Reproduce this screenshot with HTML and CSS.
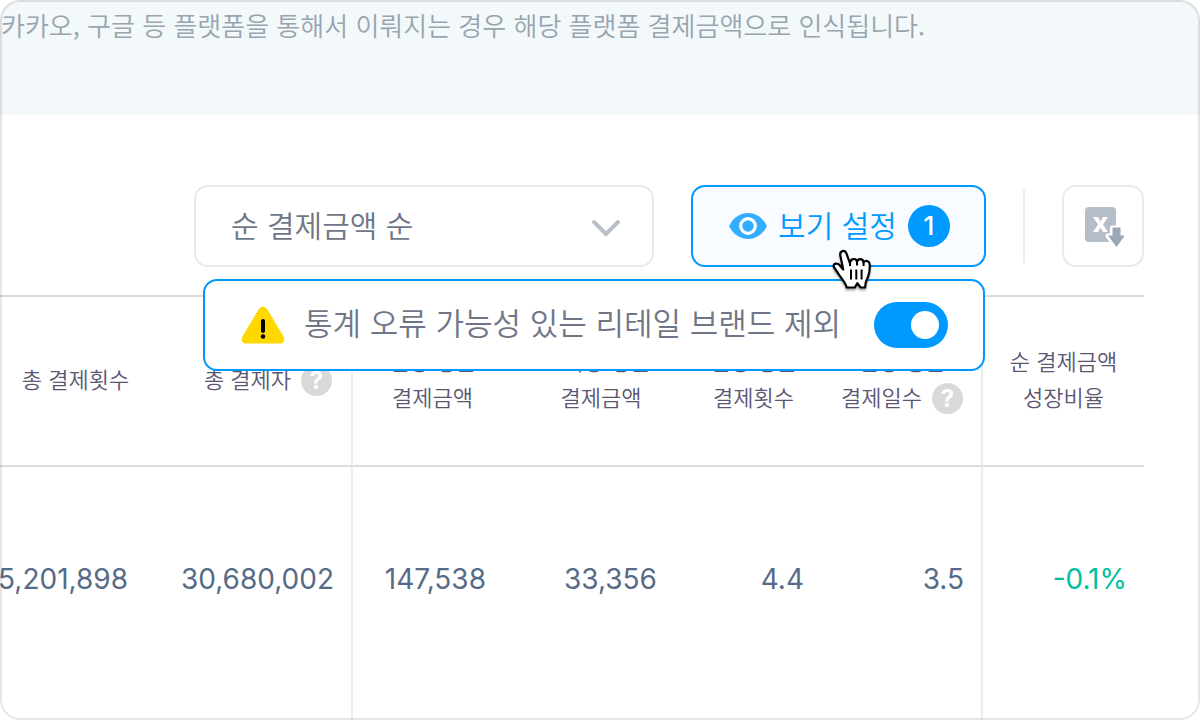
FILE: index.html
```html
<!DOCTYPE html>
<html lang="ko">
<head>
<meta charset="utf-8">
<meta name="viewport" content="width=device-width, initial-scale=1">
<title>순 결제금액 순</title>
<link rel="stylesheet" href="styles.css">
</head>
<body>
<main class="panel">
  <p class="notice">카카오, 구글 등 플랫폼을 통해서 이뤄지는 경우 해당 플랫폼 결제금액으로 인식됩니다.</p>

  <div class="toolbar">
    <div class="sort">
      <select class="sort-select" aria-label="정렬">
        <option>순 결제금액 순</option>
      </select>
      <svg class="sort-arrow" width="30" height="18" viewBox="0 0 30 18" aria-hidden="true"><path d="M3 3l12 12L27 3" fill="none" stroke="#b6bfca" stroke-width="4" stroke-linecap="round"/></svg>
    </div>

    <div class="view">
      <button class="view-button" type="button">
        <svg width="38" height="26" viewBox="0 0 38 26" aria-hidden="true"><path d="M0 13C4 5 11 0 19 0s15 5 19 13c-4 8-11 13-19 13S4 21 0 13z" fill="#33adff"/><circle cx="19" cy="13" r="7.3" fill="#33adff" stroke="#fff" stroke-width="3.2"/></svg>
        <span class="view-text">보기 설정</span>
        <span class="count">1</span>
      </button>
      <svg class="cursor" width="42" height="46" viewBox="0 0 42 46" aria-hidden="true"><path d="M11.2 22.5L8.3 8.2C7.6 4 12.8 2.300 14.300 6.200L18 16.500C18 11.400 24 10.600 25 14.500C26.500 10.800 31 11.800 31.600 15.200C34 12.600 38 14.500 37.700 18C38 22 37.400 26 36 30C34.500 33 33 35 33.200 40.500H28.600L25.300 36.200L22.800 40.500H14.700C13.700 35.500 9 31 6.500 27C5.300 24.500 3 22.300 1.800 19.700C1.200 16.200 5.500 15.600 7.700 18.200Z" fill="#fff" stroke="#000" stroke-width="2.200" stroke-linejoin="round"/><path d="M19 22.500v10M24.300 22.500v10M29.600 22.500v10M18 16v3M25 14.500v4M31.600 15v4" fill="none" stroke="#000" stroke-width="2"/></svg>

      <div class="popup">
        <svg width="44" height="38" viewBox="0 0 44 38" aria-hidden="true"><path d="M17.500 3.500Q22-2.500 26.500 3.500L42.500 30.500Q45 37 38.500 37.500H5.500Q-1 37 1.500 30.500Z" fill="#ffd800"/><path d="M22 15v10" stroke="#000" stroke-width="4" stroke-linecap="round"/><circle cx="22" cy="30.500" r="2.300"/></svg>
        <label class="popup-label" for="exclude">통계 오류 가능성 있는 리테일 브랜드 제외</label>
        <input class="toggle" id="exclude" type="checkbox" role="switch" checked>
      </div>
    </div>

    <span class="divider"></span>

    <button class="export" type="button" aria-label="엑셀 다운로드">
      <svg width="42" height="42" viewBox="0 0 42 42" aria-hidden="true"><rect x="3" y="2" width="31" height="35" rx="4" fill="#b5bdc8"/><path d="M11 12h5l2.500 4.500L21 12h5l-5 7.500 5 7.500h-5l-2.500-4.500L16 27h-5l5-7.500z" fill="#fff"/><path d="M30.500 23h8v8h4.500L34.500 42 26 31h4.500z" fill="#fff" stroke="#fff" stroke-width="5" stroke-linejoin="round"/><path d="M30.500 22.500h8v8h4.500L34.500 42 26 30.500h4.500z" fill="#9ba7b6"/></svg>
    </button>
  </div>

  <table class="stats">
    <colgroup>
      <col class="w-count"><col class="w-payer"><col class="w-amount"><col class="w-unit"><col class="w-times"><col class="w-days"><col class="w-growth">
    </colgroup>
    <thead>
      <tr>
        <th scope="col" class="count-head">총 결제횟수</th>
        <th scope="col" class="payer-head group-end"><span class="with-help">총 결제자 <button class="help" type="button" aria-label="총 결제자 도움말">?</button></span></th>
        <th scope="col">인당 평균<br>결제금액</th>
        <th scope="col">1회당 평균<br>결제금액</th>
        <th scope="col">인당 평균<br>결제횟수</th>
        <th scope="col" class="days-head group-end">인당 평균<br><span class="with-help">결제일수 <button class="help" type="button" aria-label="결제일수 도움말">?</button></span></th>
        <th scope="col">순 결제금액<br>성장비율</th>
      </tr>
    </thead>
    <tbody>
      <tr>
        <td><span class="clip">5,201,898</span></td>
        <td class="group-end">30,680,002</td>
        <td class="inset-m">147,538</td>
        <td class="inset-l">33,356</td>
        <td class="inset-s">4.4</td>
        <td class="group-end">3.5</td>
        <td class="down">-0.1%</td>
      </tr>
    </tbody>
  </table>
</main>
</body>
</html>
```
FILE: styles.css
```css
* {
  box-sizing: border-box;
}

body {
  margin: 0;
  background: #fff;
  font-family: "Noto Sans CJK KR", sans-serif;
  font-weight: 350;
  color: #6f7687;
}

button,
select {
  margin: 0;
  font: inherit;
}

svg {
  display: block;
  flex: none;
}

.panel {
  position: relative;
  min-height: 100vh;
  overflow: hidden;
  border-radius: 20px;
}

/* The frame is translucent and lies over the banner and the column rules. */
.panel::after {
  content: "";
  position: absolute;
  inset: 0;
  border: 2px solid rgba(0, 0, 0, 0.1);
  border-radius: 20px;
  pointer-events: none;
}

.notice {
  margin: 0;
  padding: 5px 0 70px 1px;
  background: #f3f8fb;
  color: #98a4ae;
  font-size: 26px;
  line-height: 40px;
}

.toolbar {
  display: flex;
  justify-content: flex-end;
  align-items: center;
  gap: 37px;
  padding: 70px 56px 28px;
}

.sort {
  position: relative;
  width: 460px;
}

.sort-select {
  display: block;
  width: 100%;
  height: 82px;
  padding: 0 35px 4px;
  appearance: none;
  border: 2px solid #eaeaea;
  border-radius: 14px;
  background: #fff;
  color: #6f7687;
  font-size: 30px;
}

.sort-arrow {
  position: absolute;
  top: 34px;
  right: 33px;
  pointer-events: none;
}

.view {
  position: relative;
}

.view-button {
  display: flex;
  align-items: center;
  justify-content: center;
  gap: 11px;
  width: 295px;
  height: 82px;
  padding: 0 0 0 2px;
  border: 2px solid #0099ff;
  border-radius: 14px;
  background: #f8fbff;
  color: #0099ff;
  font-size: 30px;
}

.view-text {
  padding-bottom: 4px;
}

.count {
  width: 42px;
  height: 42px;
  border-radius: 50%;
  background: #0099ff;
  color: #fff;
  font: 500 26px/42px Inter, sans-serif;
}

.cursor {
  position: absolute;
  z-index: 2;
  top: 62px;
  left: 141px;
  filter: drop-shadow(0 2px 1px rgba(0, 0, 0, 0.35));
}

.popup {
  position: absolute;
  z-index: 1;
  top: 94px;
  right: 1px;
  display: flex;
  align-items: center;
  gap: 19px;
  width: 782px;
  height: 92px;
  padding: 0 35px 0 36px;
  border: 2px solid #0099ff;
  border-radius: 14px;
  background: #fff;
}

.popup-label {
  flex: 1;
  padding-bottom: 6px;
  font-size: 31px;
  line-height: 44px;
  white-space: nowrap;
}

.toggle {
  display: flex;
  flex: none;
  align-items: center;
  justify-content: flex-end;
  width: 74px;
  height: 46px;
  margin: 0;
  padding: 0 9px;
  appearance: none;
  border-radius: 23px;
  background: #0099ff;
}

.toggle::before {
  content: "";
  width: 28px;
  height: 28px;
  border-radius: 50%;
  background: #fff;
}

.toggle:not(:checked) {
  justify-content: flex-start;
  background: #c8ced6;
}

.divider {
  width: 2px;
  height: 74px;
  background: #ebebeb;
}

.export {
  display: grid;
  place-items: center;
  width: 82px;
  height: 82px;
  padding: 0;
  border: 2px solid #eaeaea;
  border-radius: 14px;
  background: #fff;
}

.stats {
  width: calc(100% - 56px);
  table-layout: fixed;
  border-spacing: 0;
}

.w-count { width: 145px; }
.w-payer { width: 208px; }
.w-amount { width: 159px; }
.w-unit { width: 178px; }
.w-times { width: 127px; }
.w-days { width: 166px; }
.w-growth { width: 161px; }

.stats th {
  height: 172px;
  padding: 0 0 6px;
  border-top: 2px solid #dcdcdc;
  border-bottom: 2px solid #dcdcdc;
  color: #5a5672;
  font-size: 22px;
  font-weight: 350;
  line-height: 36px;
  white-space: nowrap;
}

.stats .count-head {
  padding-left: 6px;
}

.stats .payer-head {
  padding-left: 40px;
}

.stats .days-head {
  padding-left: 6px;
}

.stats .group-end {
  border-right: 2px solid #ececec;
}

.with-help {
  display: inline-flex;
  align-items: center;
  gap: 10px;
  height: 36px;
}

.help {
  align-self: flex-end;
  width: 31px;
  height: 31px;
  padding: 0;
  border: 0;
  border-radius: 50%;
  background: #d9d9d9;
  color: #fff;
  font: 700 24px/31px Inter, sans-serif;
}

.stats td {
  padding: 92px 17px 120px 0;
  color: #566b87;
  font-family: Inter, sans-serif;
  font-size: 28px;
  font-weight: 400;
  line-height: 40px;
  text-align: right;
  vertical-align: top;
  white-space: nowrap;
}

.clip {
  display: flex;
  justify-content: flex-end;
}

.stats .inset-s { padding-right: 13px; }
.stats .inset-m { padding-right: 26px; }
.stats .inset-l { padding-right: 33px; }

.stats .down {
  color: #00c19f;
}
```
